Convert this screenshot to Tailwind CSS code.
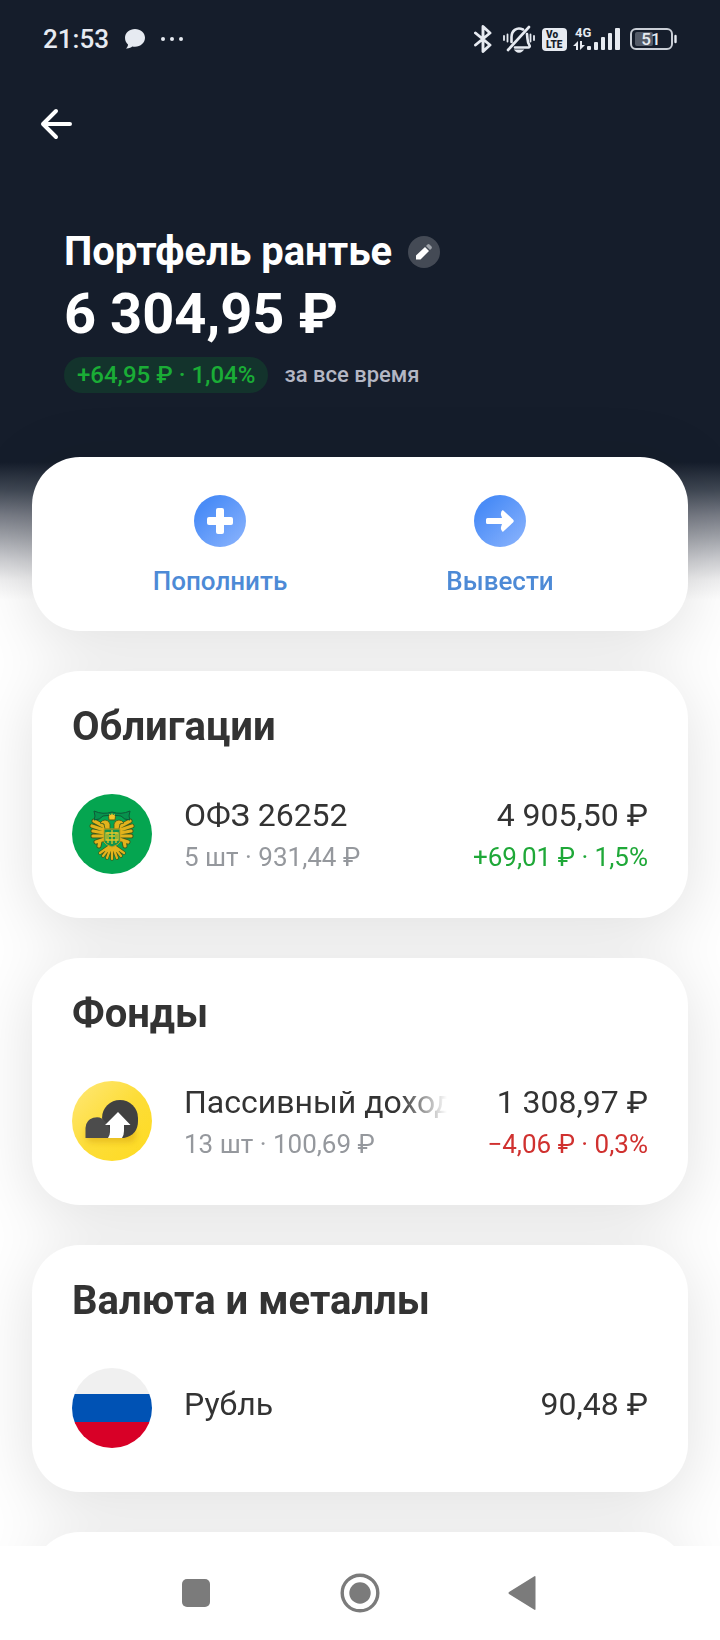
<!DOCTYPE html>
<html lang="ru">
<head>
    <meta charset="UTF-8">
    <meta name="viewport" content="width=device-width, initial-scale=1.0">
    <title>Портфель рантье</title>
    <script src="https://cdn.jsdelivr.net/npm/@tailwindcss/browser@4"></script>
</head>
<body class="h-screen flex flex-col bg-white text-[#333333] font-[Roboto,'Noto_Sans',sans-serif]">
    <div class="flex-1 min-h-0 overflow-y-auto [scrollbar-width:none]">
        <div class="bg-[linear-gradient(to_bottom,#151d2b_0px,#151d2b_462px,#404854_490px,#777b85_515px,#9da0a7_535px,#cecfd3_560px,#f0f0f1_580px,#ffffff_600px)]">

            <!-- Status bar -->
            <div class="h-[78px] px-[43px] flex items-center justify-between text-[#e6eaf1]">
                <div class="flex items-center">
                    <span class="text-[26px] leading-8 font-medium">21:53</span>
                    <svg class="ml-4 w-5 h-5" viewBox="0 0 20 20" fill="currentColor"><path d="M10 0C4.500 0 0 3.800 0 8.800c0 3 1.400 5.400 3 6.800 0 1.800-1 3.200-2 3.800 3 .2 5.200-1 6.200-2 .9.200 1.800.3 2.800.3 5.600 0 10-3.900 10-8.900S15.500 0 10 0z"/></svg>
                    <svg class="ml-4 w-[22px] h-1" viewBox="0 0 22 4" fill="currentColor"><circle cx="2" cy="2" r="2"/><circle cx="11" cy="2" r="2"/><circle cx="20" cy="2" r="2"/></svg>
                </div>
                <div class="flex items-center">
                    <svg class="w-[18px] h-7" viewBox="0 0 18 28" fill="none" stroke="currentColor" stroke-width="2.900" stroke-linejoin="round" stroke-linecap="round"><path d="M1.500 8L16 20 9 26.500V1.500L16 8 1.500 20"/></svg>
                    <svg class="ml-[11px] w-8 h-7" viewBox="0 0 32 28" fill="none" stroke="currentColor" stroke-width="2.600" stroke-linecap="round">
                        <path d="M26 2L5 25M20 4.500C13.500 1.500 8.500 6 8.500 12v5M24 9c.8 6 0 8 2.500 11.500 .6 1-.2 2-1.200 2H12"/>
                        <path d="M13 25.500h6q-3 2.800-6 0zM4.500 9.500v7M1 11v4M27.500 9.500v7M31 11v4" stroke-width="1.800"/>
                    </svg>
                    <svg class="ml-[7px] w-[25px] h-[23px] overflow-visible" viewBox="0 0 25 23"><rect width="25" height="23" rx="4" fill="currentColor"/><text x="4" y="10" font-size="10" font-weight="900" fill="#151d2b">Vo</text><text x="4" y="20" font-size="10" font-weight="900" fill="#151d2b">LTE</text></svg>
                    <svg class="ml-[6px] w-[47px] h-6 overflow-visible" viewBox="0 0 47 24" fill="currentColor">
                        <text x="2" y="10" font-size="13" font-weight="700">4G</text>
                        <path d="M5 14v9H3v-4H0zM7 23v-9h2v4h3z"/>
                        <rect x="14" y="19" width="4" height="4" rx="1"/><rect x="21" y="15" width="4" height="8" rx="1"/><rect x="28" y="10" width="4" height="13" rx="1"/><rect x="35" y="6" width="4" height="17" rx="1"/><rect x="42" y="1" width="5" height="22" rx="1"/>
                    </svg>
                    <svg class="ml-[10px] w-[47px] h-[22px]" viewBox="0 0 47 22">
                        <rect x="5" y="4" width="18" height="14" rx="2" fill="#545b68"/>
                        <rect x="1" y="1" width="41" height="20" rx="5" fill="none" stroke="#c9ced6" stroke-width="2"/>
                        <path d="M45.500 8v6" stroke="currentColor" stroke-width="2.400" stroke-linecap="round"/>
                        <text x="21" y="17" text-anchor="middle" font-size="17" font-weight="500" fill="currentColor">51</text>
                    </svg>
                </div>
            </div>

            <!-- Portfolio header -->
            <header class="px-8 text-white">
                <button type="button" aria-label="Назад" class="mt-[22px] w-12 h-12 flex items-center justify-center">
                    <svg class="w-8 h-8" viewBox="0 0 32 32" fill="none" stroke="currentColor" stroke-width="4" stroke-linecap="round" stroke-linejoin="round"><path d="M30 16H3M16 3L3 16l13 13"/></svg>
                </button>
                <div class="px-8 pt-20">
                    <div class="flex items-center gap-4">
                        <h1 class="text-[40px] leading-[48px] font-bold">Портфель рантье</h1>
                        <button type="button" aria-label="Переименовать" class="w-8 h-8 rounded-full bg-[#444a55] flex items-center justify-center">
                            <svg class="w-4 h-4" viewBox="0 0 16 16"><path d="M0 15.500v-4L9 3l4 4-8.500 8.500z" fill="#fff"/><path d="M10 2l1.500-1.500q1-.8 2 0l2 2q.8 1 0 2L14 6z" fill="#9ea2a9"/></svg>
                        </button>
                    </div>
                    <p class="pt-1 text-[56px] leading-[69px] font-bold">6 304,95 ₽</p>
                    <div class="pt-2 flex items-center gap-4 font-medium">
                        <span class="px-[13px] rounded-full bg-[#13332c] text-2xl leading-9 text-[#1aad36]">+64,95 ₽ · 1,04%</span>
                        <span class="text-[22px] leading-9 text-[#b4b7c4]">за все время</span>
                    </div>
                </div>
            </header>

            <main class="mt-16 px-8 flex flex-col gap-10 drop-shadow-[0_12px_32px_rgba(0,0,0,0.12)]">
                <!-- Actions -->
                <div class="h-[174px] px-12 pt-[38px] grid grid-cols-2 items-start rounded-[48px] bg-white text-[26px] leading-8 font-medium text-[#4d8ad6]">
                    <button type="button" class="flex flex-col items-center gap-[18px]">
                        <svg class="w-[52px] h-[52px]" viewBox="0 0 52 52">
                            <defs><linearGradient id="blue" x1="0" y1="0" x2="1" y2="1"><stop offset="0.200" stop-color="#4a8cf7"/><stop offset="1" stop-color="#8db5fd"/></linearGradient></defs>
                            <circle cx="26" cy="26" r="26" fill="url(#blue)"/><rect x="22" y="13" width="8" height="26" rx="2" fill="#fff"/><rect x="13" y="22" width="26" height="8" rx="2" fill="#fff"/>
                        </svg>
                        Пополнить
                    </button>
                    <button type="button" class="flex flex-col items-center gap-[18px]">
                        <svg class="w-[52px] h-[52px]" viewBox="0 0 52 52">
                            <circle cx="26" cy="26" r="26" fill="url(#blue)"/><path d="M12 24.500q0-1.500 1.500-1.500H28l-1-3q-.6-3.500 1.800-5L39 24.500q1.500 1.500 0 3L28.800 37q-2.400-1.500-1.800-5l1-3H13.500q-1.500 0-1.500-1.500z" fill="#fff"/>
                        </svg>
                        Вывести
                    </button>
                </div>

                <!-- Bonds -->
                <section class="px-10 pt-8 pb-10 rounded-[48px] bg-white">
                    <h2 class="text-[40px] leading-[48px] font-bold">Облигации</h2>
                    <div class="mt-[43px] flex items-start">
                        <svg class="w-20 h-20 shrink-0" viewBox="0 0 80 80">
                            <circle cx="40" cy="40" r="40" fill="#05a550"/>
                            <!-- wings -->
                            <path d="M33 33L22 27M32 36L20 32M32 39L21 37M32 42L21 42M33 45L24 48M47 33L58 27M48 36L60 32M48 39L59 37M48 42L59 42M47 45L56 48M28 47l-1 5M52 47l1 5" fill="none" stroke="#3d5a1c" stroke-width="5" stroke-linecap="round"/>
                            <path d="M33 33L22 27M32 36L20 32M32 39L21 37M32 42L21 42M33 45L24 48M47 33L58 27M48 36L60 32M48 39L59 37M48 42L59 42M47 45L56 48M28 47l-1 5M52 47l1 5" fill="none" stroke="#e2b31c" stroke-width="3.200" stroke-linecap="round"/>
                            <!-- tail -->
                            <path d="M38 52l-10 7M38 53l-7 9M39 53l-4 11M40 53v12M41 53l4 11M42 53l7 9M42 52l10 7" fill="none" stroke="#3d5a1c" stroke-width="3.600" stroke-linecap="round"/>
                            <path d="M38 52l-10 7M38 53l-7 9M39 53l-4 11M40 53v12M41 53l4 11M42 53l7 9M42 52l10 7" fill="none" stroke="#e2b31c" stroke-width="2.200" stroke-linecap="round"/>
                            <!-- heads and crown -->
                            <g fill="#e2b31c" stroke="#3d5a1c" stroke-width="0.800">
                                <path d="M38 35V30q-1-4-5-4-3 0-5 3l4 1 1 5zM42 35V30q1-4 5-4 3 0 5 3l-4 1-1 5z"/>
                                <path d="M36 20l2 2 2-3 2 3 2-2-1 6h-6z"/>
                            </g>
                            <path d="M22 17q9 4 18 1 9 3 18-1l-1 5 1 4q-6 0-9-4-9-2-18 0-3 4-9 4l1-4z" fill="#07924d" stroke="#0d5a38"/>
                            <path d="M37 20l2 1 1-2 1 2 2-1-1 5h-4z" fill="#f2c52a"/>
                            <path d="M32 35h16v13q-2 3-8 5-6-2-8-5z" fill="#12944c" stroke="#c99f1a"/>
                            <path d="M36 38v11M44 38v11M40 36v14M34 39h12v7H34zM37 42h6" stroke="#e2c52a" stroke-width="1.300" fill="none"/>
                        </svg>
                        <div class="ml-8 flex-1 min-w-0">
                            <p class="text-[32px] leading-[42px]">ОФЗ 26252</p>
                            <p class="text-[26px] leading-[42px] text-[#95989d]">5 шт · 931,44 ₽</p>
                        </div>
                        <div class="ml-10 text-right">
                            <p class="text-[32px] leading-[42px]">4 905,50 ₽</p>
                            <p class="text-[26px] leading-[42px] text-[#1fa838]">+69,01 ₽ · 1,5%</p>
                        </div>
                    </div>
                </section>

                <!-- Funds -->
                <section class="px-10 pt-8 pb-10 rounded-[48px] bg-white">
                    <h2 class="text-[40px] leading-[48px] font-bold">Фонды</h2>
                    <div class="mt-[43px] flex items-start">
                        <svg class="w-20 h-20 shrink-0" viewBox="0 0 80 80">
                            <defs>
                                <linearGradient id="gold" x1="0" y1="0" x2="1" y2="1"><stop offset="0" stop-color="#ffe87a"/><stop offset="0.500" stop-color="#fddd38"/><stop offset="1" stop-color="#fedb20"/></linearGradient>
                                <filter id="soft" x="-20%" y="-20%" width="140%" height="160%"><feGaussianBlur stdDeviation="3"/></filter>
                            </defs>
                            <circle cx="40" cy="40" r="40" fill="url(#gold)"/>
                            <rect x="14" y="46" width="50" height="15" rx="6" fill="#d9a915" opacity="0.600" filter="url(#soft)"/>
                            <path d="M30 37a18 18 0 0 1 36 0v3q0 14-14 17H36z" fill="#414141"/>
                            <path d="M13.500 57V47a11 11 0 0 1 20-6q5 6 6 16z" fill="#4c4c4c"/>
                            <path d="M46 31L58.500 44H52v6q0 4-2 7H36q2-3 2-6v-7h-5z" fill="#fff"/>
                        </svg>
                        <div class="ml-8 flex-1 min-w-0">
                            <p class="text-[32px] leading-[42px] whitespace-nowrap overflow-hidden [mask-image:linear-gradient(to_right,#000_calc(100%-48px),transparent)]">Пассивный доход</p>
                            <p class="text-[26px] leading-[42px] text-[#95989d]">13 шт · 100,69 ₽</p>
                        </div>
                        <div class="ml-10 text-right">
                            <p class="text-[32px] leading-[42px]">1 308,97 ₽</p>
                            <p class="text-[26px] leading-[42px] text-[#d0312f]">−4,06 ₽ · 0,3%</p>
                        </div>
                    </div>
                </section>

                <!-- Currency and metals -->
                <section class="px-10 pt-8 pb-11 rounded-[48px] bg-white">
                    <h2 class="text-[40px] leading-[48px] font-bold">Валюта и металлы</h2>
                    <div class="mt-[43px] flex items-start">
                        <div class="w-20 h-20 shrink-0 rounded-full bg-[linear-gradient(#f0f0f0_26px,#0052b4_26px,#0052b4_54px,#d80027_54px)]"></div>
                        <p class="ml-8 flex-1 min-w-0 text-[32px] leading-[72px]">Рубль</p>
                        <p class="ml-10 text-[32px] leading-[72px]">90,48 ₽</p>
                    </div>
                </section>

                <!-- Next card, cut off by the navigation bar -->
                <section class="h-20 rounded-t-[48px] bg-white"></section>
            </main>
        </div>
    </div>

    <!-- System navigation -->
    <nav class="h-[94px] shrink-0 flex items-center justify-center gap-29 bg-white text-[#7b7b7b]">
        <button type="button" aria-label="Недавние" class="w-12 h-12 flex items-center justify-center">
            <svg class="w-7 h-7" viewBox="0 0 28 28" fill="currentColor"><rect width="28" height="28" rx="5"/></svg>
        </button>
        <button type="button" aria-label="Домой" class="w-12 h-12 flex items-center justify-center">
            <svg class="w-10 h-10" viewBox="0 0 40 40"><circle cx="20" cy="20" r="17.800" fill="none" stroke="currentColor" stroke-width="3.400"/><circle cx="20" cy="20" r="10.700" fill="currentColor"/></svg>
        </button>
        <button type="button" aria-label="Назад" class="w-12 h-12 flex items-center justify-center">
            <svg class="w-8 h-9" viewBox="0 0 32 36" fill="currentColor"><path d="M26 1.500q1.500-1 1.500.5v32q0 1.500-1.500.5L1 19q-1-1 0-2z"/></svg>
        </button>
    </nav>
</body>
</html>
